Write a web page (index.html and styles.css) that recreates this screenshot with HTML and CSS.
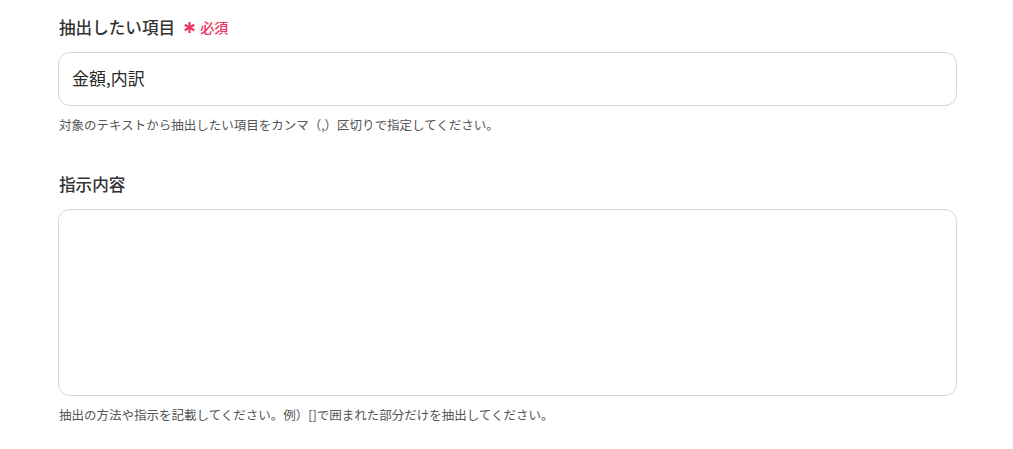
FILE: index.html
```html
<!DOCTYPE html>
<html lang="ja">
<head>
<meta charset="utf-8">
<link rel="stylesheet" href="styles.css">
</head>
<body>
<div class="form">
  <div class="field">
    <div class="label">抽出したい項目<span class="req"><svg class="ast" viewBox="0 0 10 10" width="11" height="11"><g stroke="currentColor" stroke-width="2" stroke-linecap="butt"><line x1="5" y1="0" x2="5" y2="10"/><line x1="0.7" y1="2.5" x2="9.3" y2="7.5"/><line x1="0.7" y1="7.5" x2="9.3" y2="2.5"/></g></svg>必須</span></div>
    <div class="input">金額,内訳</div>
    <div class="help">対象のテキストから抽出したい項目をカンマ（,）区切りで指定してください。</div>
  </div>
  <div class="field second">
    <div class="label">指示内容</div>
    <div class="textarea"></div>
    <div class="help">抽出の方法や指示を記載してください。例）[]で囲まれた部分だけを抽出してください。</div>
  </div>
</div>
</body>
</html>
```
FILE: styles.css
```css
html, body { margin: 0; padding: 0; background: #fff; }
body {
  font-family: "Noto Sans CJK JP", "Noto Sans", sans-serif;
  color: #333;
}
.form {
  padding: 15px 56px 0 58px;
  display: flex;
  flex-direction: column;
}
.field { display: flex; flex-direction: column; }
.second { margin-top: 38px; }
.label {
  font-size: 16.6px;
  line-height: 24px;
  font-weight: 500;
  color: #333;
  display: flex;
  align-items: center;
  padding-left: 1px;
}
.req {
  margin-left: 9px;
  color: #ec3560;
  font-size: 14px;
  font-weight: 500;
  display: flex;
  align-items: center;
}
.ast { margin-right: 5px; margin-top: 1px; }
.input {
  margin-top: 13px;
  height: 52px;
  border: 1px solid #d3d6dc;
  border-radius: 12px;
  padding: 0 13px;
  font-size: 17px;
  line-height: 50px;
  color: #2a2a2a;
}
.textarea {
  margin-top: 13px;
  height: 185px;
  border: 1px solid #d3d6dc;
  border-radius: 12px;
}
.help {
  margin-top: 10px;
  font-size: 12.5px;
  line-height: 18px;
  color: #555;
  padding-left: 1px;
}
```
